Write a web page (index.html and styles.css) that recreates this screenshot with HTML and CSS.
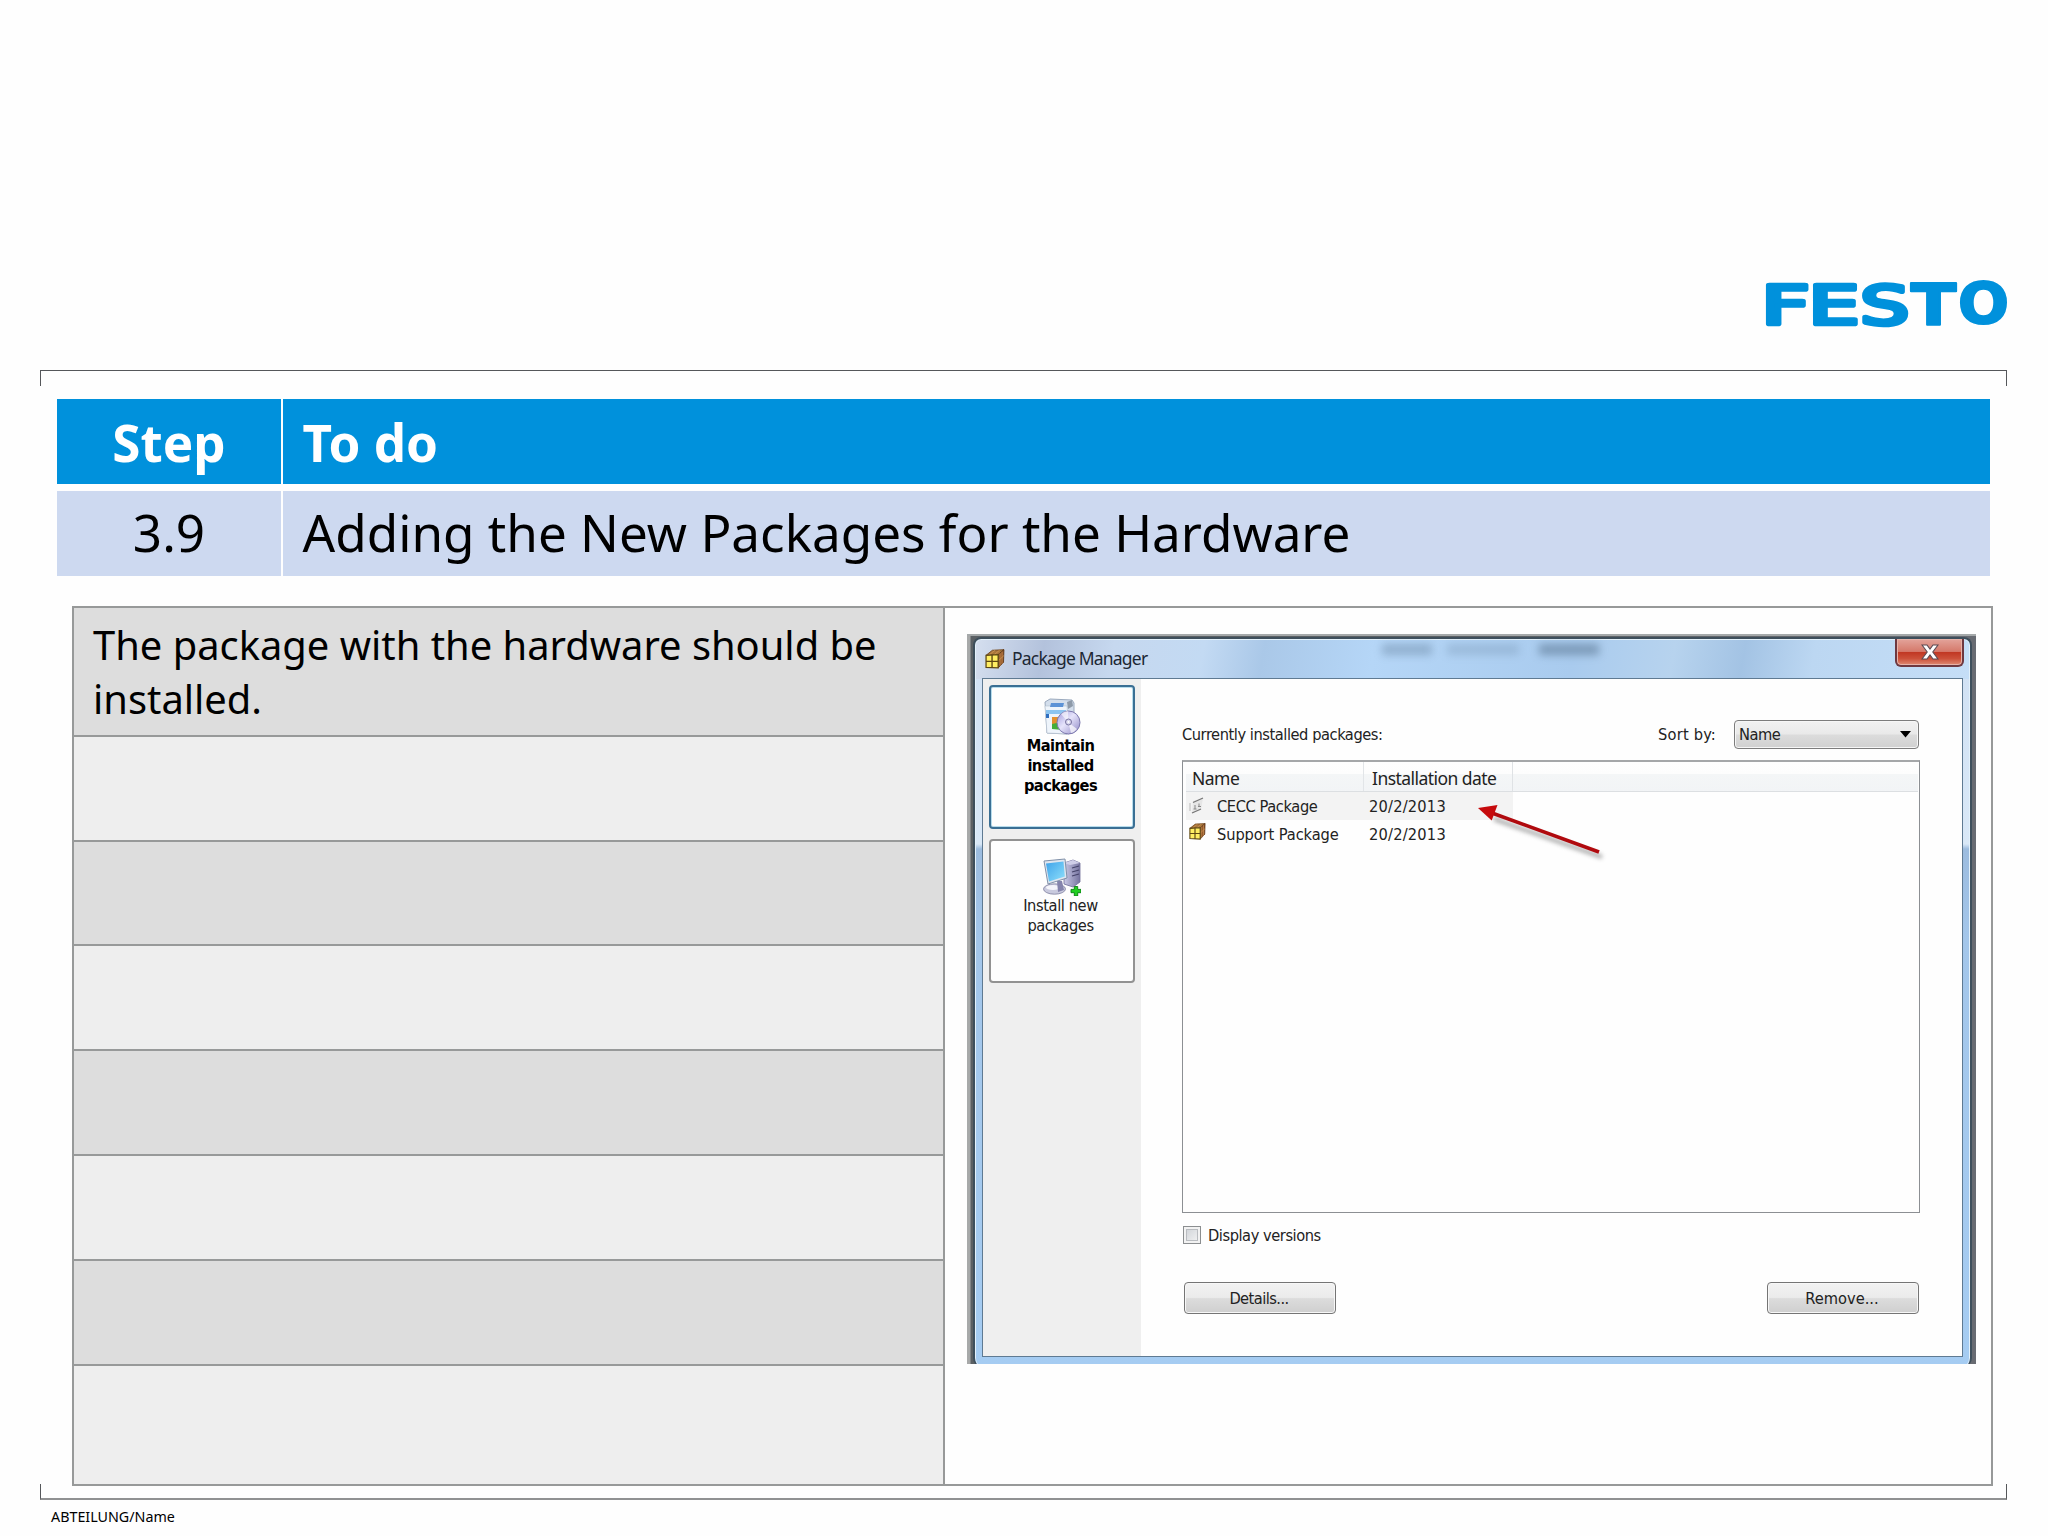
FILE: index.html
```html
<!DOCTYPE html>
<html lang="en">
<head>
    <meta charset="UTF-8">
    <meta name="viewport" content="width=device-width, initial-scale=1.0">
    <title>3.9 Adding the New Packages for the Hardware</title>
    <link rel="stylesheet" href="styles.css">
</head>
<body>
    <svg class="defs" width="0" height="0">
        <defs>
            <linearGradient id="screen" x1="0" y1="0" x2="1" y2="1">
                <stop offset="0" stop-color="#3fa3ea"/>
                <stop offset="1" stop-color="#8ee0fb"/>
            </linearGradient>
            <linearGradient id="metal" x1="0" y1="0" x2="1" y2="0">
                <stop offset="0" stop-color="#c9c9e6"/>
                <stop offset="1" stop-color="#75739f"/>
            </linearGradient>
            <linearGradient id="disc" x1="0" y1="0" x2="1" y2="1">
                <stop offset="0" stop-color="#9f98dc"/>
                <stop offset="0.45" stop-color="#e6e4fb"/>
                <stop offset="1" stop-color="#8d86c4"/>
            </linearGradient>
            <symbol id="package" viewBox="0 0 19 19">
                <path d="M1 6 7 1.2 18 0.6 12.5 5.4Z" fill="#a8763c" stroke="#6b421c" stroke-width=".8"/>
                <path d="M12.5 5.4 18 .6 17.6 12.5 12.5 18Z" fill="#8a4f28" stroke="#5c3515" stroke-width=".8"/>
                <path d="M14.3 4v12M16.2 2.5v11.7M12.5 11.4 18 6.2M4 5.6 9.8 1M8.6 5.5 14 1" stroke="#d39a55" stroke-width=".7" fill="none"/>
                <path d="M1 6 12.5 5.4V18L1 17.4Z" fill="#ffee62" stroke="#5d4713" stroke-width="1.2"/>
                <path d="M6.7 5.8v12M1 11.7h11.5" stroke="#5d4713" stroke-width="1.3"/>
            </symbol>
        </defs>
    </svg>

    <div class="slide">
        <header class="logo">
            <svg width="251" height="60" viewBox="0 0 251 60">
                <text x="1.200" y="43.500" textLength="48.500" lengthAdjust="spacingAndGlyphs">F</text>
                <text x="48.600" y="43.500" textLength="51" lengthAdjust="spacingAndGlyphs">E</text>
                <text x="100.200" y="43.500" textLength="49" lengthAdjust="spacingAndGlyphs">S</text>
                <text class="heavy" x="150.700" y="44.800" textLength="45.600" lengthAdjust="spacingAndGlyphs">T</text>
                <text class="heavy" x="198" y="44.400" textLength="51" lengthAdjust="spacingAndGlyphs">O</text>
            </svg>
        </header>
        <div class="bracket bracket-top"></div>

        <div class="steps">
            <div class="cell head center">Step</div>
            <div class="cell head">To do</div>
            <div class="cell center">3.9</div>
            <div class="cell">Adding the New Packages for the Hardware</div>
        </div>

        <div class="content">
            <div class="notes">
                <div class="note">The package with the hardware should be installed.</div>
                <div class="note"></div>
                <div class="note"></div>
                <div class="note"></div>
                <div class="note"></div>
                <div class="note"></div>
                <div class="note"></div>
                <div class="note"></div>
            </div>
            <div class="figure">
                <div class="desktop">
                    <div class="window">
                        <div class="titlebar">
                            <svg class="title-icon" width="20" height="20"><use href="#package"/></svg>
                            <span class="title">Package Manager</span>
                            <span class="ghost ghost-a"></span>
                            <span class="ghost ghost-b"></span>
                            <span class="ghost ghost-c"></span>
                            <div class="close">
                                <svg width="18" height="16" viewBox="0 0 18 16">
                                    <path d="M1 1h5l3 4 3-4h5l-5.200 7 5.200 7h-5l-3-4-3 4H1l5.200-7Z" fill="#fff" stroke="#5b4a52" stroke-width="1.100"/>
                                </svg>
                            </div>
                        </div>
                        <div class="client">
                            <div class="sidebar">
                                <div class="tile active">
                                    <svg width="38" height="38" viewBox="0 0 38 38">
                                        <path d="M2 4 7 1 29 2 31 5V30L24 36 4 35Z" fill="#d3deec" stroke="#9aa9bd"/>
                                        <path d="M2 8h22l2 28-22-1Z" fill="#eef4fb" stroke="#b3bfcc" stroke-width=".6"/>
                                        <path d="M8 5h13l-1 4H7Z" fill="#5c92d6"/>
                                        <path d="M24 4 29 2l1 6-5 3Z" fill="#8e9aa9"/>
                                        <path d="M3 12h20v4H3Z" fill="#8cc4f0"/>
                                        <path d="M3 16h3v4H3Z" fill="#2f6fc0"/>
                                        <path d="M9 19h11v13l-11-1Z" fill="#45ad3a"/>
                                        <path d="M9 19h9v5l-9 2Z" fill="#e4902f"/>
                                        <circle cx="25.500" cy="24.500" r="11.500" fill="url(#disc)" stroke="#7c78ad"/>
                                        <path d="M25.500 24.500 18 16a11 11 0 0 1 7-3Z" fill="#fff" opacity=".6"/>
                                        <path d="M25.500 24.500 34 31a11 11 0 0 1-6 4Z" fill="#fff" opacity=".7"/>
                                        <circle cx="25.500" cy="24" r="3" fill="#d8d6ef" stroke="#77739f"/>
                                        <circle cx="25.500" cy="24" r="1" fill="#fff"/>
                                    </svg>
                                    <div class="tile-text">Maintain<br>installed<br>packages</div>
                                </div>
                                <div class="tile">
                                    <svg width="38" height="38" viewBox="0 0 38 38">
                                        <path d="M21 5 30 2 37 5V24L30 29 21 26Z" fill="url(#metal)" stroke="#6f6d98" stroke-width=".8"/>
                                        <path d="M29 10l7-2M29 14l7-2M29 18l7-2" stroke="#454369" stroke-width="1.100"/>
                                        <path d="M21 5 30 2 37 5 27 7Z" fill="#cfcee8"/>
                                        <ellipse cx="11.500" cy="31" rx="11" ry="5.200" fill="#c9cade" stroke="#7f809f" stroke-width=".8"/>
                                        <ellipse cx="10" cy="29.500" rx="7" ry="2.600" fill="#f5f5fb"/>
                                        <path d="M14 23h5l2 9-6 2Z" fill="#8584ac"/>
                                        <path d="M1 3 22 1 24 20 5 26Z" fill="#dfe6f0" stroke="#8090a8"/>
                                        <path d="M3 5.500 20.500 3.500 21.800 18.500 6 23.500Z" fill="url(#screen)"/>
                                        <path d="M31.300 28.500h3.400v2.900H38v3.300h-3.300V38h-3.400v-3.300H28v-3.300h3.300Z" fill="#21cf21" stroke="#087d12" stroke-width=".9"/>
                                    </svg>
                                    <div class="tile-text">Install new<br>packages</div>
                                </div>
                            </div>
                            <div class="main">
                                <div class="toolbar">
                                    <span class="t-installed">Currently installed packages:</span>
                                    <span class="t-sort">Sort by:</span>
                                    <div class="select">
                                        <span class="t-select">Name</span>
                                        <svg width="11" height="7" viewBox="0 0 11 7"><path d="M0 0h11L5.500 6.500Z" fill="#000"/></svg>
                                    </div>
                                </div>
                                <div class="list">
                                    <div class="list-head">
                                        <span class="col-name">Name</span>
                                        <span class="col-date">Installation date</span>
                                    </div>
                                    <div class="list-row hover">
                                        <span class="row-icon">
                                            <svg width="16" height="18" viewBox="0 0 16 18">
                                                <path d="M4 4 14 1 12 13 3 16Z" fill="#e6e6e6"/>
                                                <path d="M4 5.500 14 1M3 16l9-4" stroke="#777" stroke-width="1.300" fill="none"/>
                                                <path d="M1 6v8" stroke="#ccc" stroke-width="1.500"/>
                                                <path d="M6 8v4M10 6.500v3M4.500 12h3M9 9.500h3" stroke="#888" stroke-width="1"/>
                                            </svg>
                                        </span>
                                        <span class="row-name t-cecc">CECC Package</span>
                                        <span class="row-date">20/2/2013</span>
                                    </div>
                                    <div class="list-row">
                                        <span class="row-icon row-icon-package"><svg width="17" height="17"><use href="#package"/></svg></span>
                                        <span class="row-name t-support">Support Package</span>
                                        <span class="row-date">20/2/2013</span>
                                    </div>
                                    <svg class="arrow" width="136" height="70" viewBox="0 0 136 70">
                                        <path class="arrow-shadow" d="M20 20 128 58" stroke="#777" stroke-width="4"/>
                                        <path d="M18 14 125 53" stroke="#b00a0e" stroke-width="3.600"/>
                                        <path d="M4 9 23.500 6 17.700 21.500Z" fill="#c60a0c"/>
                                    </svg>
                                </div>
                                <div class="check-row">
                                    <span class="check"></span>
                                    <span class="t-versions">Display versions</span>
                                </div>
                                <div class="buttons">
                                    <div class="button t-details">Details...</div>
                                    <div class="button t-remove">Remove...</div>
                                </div>
                            </div>
                        </div>
                    </div>
                </div>
            </div>
        </div>

        <div class="bracket bracket-bottom"></div>
        <footer class="footer">ABTEILUNG/Name</footer>
    </div>
</body>
</html>
```
FILE: styles.css
```css
* {
    box-sizing: border-box;
}
body {
    margin: 0;
    background: #fefefe;
    color: #000;
    font-family: "Noto Sans", sans-serif;
}
svg {
    display: block;
}
.defs {
    position: absolute;
}
.slide {
    width: 2048px;
    height: 1536px;
    overflow: hidden;
    display: flex;
    flex-direction: column;
}

/* header */
.logo {
    height: 370px;
    padding: 280px 37px 0 0;
    display: flex;
    justify-content: flex-end;
}
.logo svg {
    overflow: visible;
}
.logo text {
    font-family: "DejaVu Sans", sans-serif;
    font-size: 54px;
    fill: #0091dc;
    stroke: #0091dc;
    stroke-width: 4.6px;
    stroke-linejoin: round;
}
.logo .heavy {
    font-weight: 700;
    font-size: 57.5px;
    stroke-width: 2px;
}
.bracket {
    flex: none;
    width: 1967px;
    height: 16px;
    margin-left: 40px;
    border: 1px solid #55575a;
}
.bracket-top {
    border-bottom: none;
}
.bracket-bottom {
    margin-top: -2px;
    border-top: none;
    border-bottom: 2px solid #909192;
}

/* step table */
.steps {
    flex: none;
    width: 1933px;
    margin: 12.5px 0 0 57px;
    display: grid;
    grid-template-columns: 224px 1fr;
    grid-template-rows: 85.5px 85px;
    gap: 7px 2px;
}
.cell {
    background: #cdd9f0;
    padding: 0 19.5px;
    font-size: 51.2px;
    line-height: 83px;
    white-space: nowrap;
}
.cell.head {
    background: #0091dc;
    color: #fff;
    font-weight: 700;
    line-height: 87px;
}
.cell.center {
    text-align: center;
}

/* notes and figure */
.content {
    flex: none;
    width: 1921px;
    height: 880px;
    margin: 30px 0 0 72px;
    display: grid;
    grid-template-columns: 869px 1fr;
    gap: 2px;
    padding: 2px;
    background: #979999;
}
.notes {
    display: grid;
    grid-template-rows: 126.8px repeat(6, 102.85px) 1fr;
    gap: 2px;
}
.note {
    padding: 10px 19px;
    font-size: 39.87px;
    line-height: 54.4px;
    background: #eeeeee;
}
.note:nth-child(odd) {
    background: #dddddd;
}
.figure {
    background: #fefefe;
    padding: 26px 0 0 22px;
}

/* window */
.desktop {
    width: 1009px;
    height: 730px;
    padding: 3px 4px 0 6px;
    overflow: hidden;
    background: linear-gradient(90deg, #a7a9a9 0, #a7a9a9 3px, #5b6064 4px, #5b6064 50%, #686b72 100%);
    border-top: 2px solid #a5a9aa;
}
.window {
    height: 730px;
    margin-top: -2px;
    padding: 0 7px;
    border: 2px solid #3e4f5c;
    border-bottom: none;
    border-radius: 8px 8px 9px 9px;
    background:
        linear-gradient(100deg, #d5dfef 0, #b3c2dc 7%, #c6d8ef 14%, #c3daf3 23%, #aac8e8 29%, #b5d6f7 40%, #a9cbee 60%, #b7d3ee 70%, #a3c3e4 77%, #bcd7f2 84%, #c5def7 100%) 0 0 / 100% 40px no-repeat,
        linear-gradient(180deg, #d0e1f4 0, #d9e8f7 205px, #9cbcdf 210px, #a3c6ea 300px, #a5ccf2 100%);
    box-shadow: inset 0 0 0 1px #e3f1fb;
}
.titlebar {
    position: relative;
    height: 39px;
    padding: 10px 0 0 3px;
    display: flex;
}
.title {
    margin-left: 7px;
    font-size: 17.5px;
    line-height: 18px;
    color: #1c2733;
    letter-spacing: -0.8px;
}
.ghost {
    position: absolute;
    top: 5px;
    height: 11px;
    background: #5c7894;
    filter: blur(4px);
    opacity: .4;
}
.ghost-a {
    left: 400px;
    width: 50px;
}
.ghost-b {
    left: 465px;
    width: 72px;
    opacity: .25;
}
.ghost-c {
    left: 557px;
    width: 60px;
    opacity: .6;
}
.close {
    position: absolute;
    top: 0;
    right: -1px;
    width: 69px;
    height: 28px;
    display: flex;
    align-items: center;
    justify-content: center;
    border: 2px solid #6e3840;
    border-top: none;
    border-radius: 0 0 6px 6px;
    background: linear-gradient(180deg, #e3a49b 0, #d5796b 48%, #c03622 50%, #cc5039 75%, #de8a73 100%);
    box-shadow: inset 0 0 0 1px #e7b2a8;
}
.client {
    height: 679px;
    display: flex;
    border: 1px solid #5f7a92;
    background: #fefefe;
    font-family: "DejaVu Sans Condensed", "DejaVu Sans", sans-serif;
    font-stretch: condensed;
    font-size: 16.3px;
    color: #222;
}
.sidebar {
    width: 158px;
    padding: 6px 6px;
    background: #efefef;
}
.tile {
    height: 144px;
    margin-bottom: 10px;
    padding-top: 17px;
    display: flex;
    flex-direction: column;
    align-items: center;
    background: #fefefe;
    border: 2px solid #929292;
    border-radius: 4px;
}
.tile.active {
    padding-top: 11px;
    border-color: #3a6f94;
    box-shadow: inset 0 0 0 1px #b7dcec;
    color: #000;
    font-weight: 700;
}
.tile-text {
    margin-right: 3px;
    text-align: center;
    line-height: 20px;
    letter-spacing: -0.4px;
}
.tile.active .tile-text {
    letter-spacing: -0.6px;
}
.main {
    flex: 1;
    padding: 41px 42px 0 41px;
    white-space: nowrap;
}
.toolbar {
    height: 28px;
    padding-right: 1px;
    display: flex;
    align-items: center;
}
.t-installed {
    letter-spacing: -0.45px;
}
.t-sort {
    margin-left: auto;
    margin-right: 18px;
    letter-spacing: 0.2px;
}
.select {
    width: 185px;
    height: 29px;
    padding: 0 7px 0 4px;
    display: flex;
    align-items: center;
    justify-content: space-between;
    border: 1.5px solid #7c7c7c;
    border-radius: 4px;
    background: linear-gradient(180deg, #f1f1f1 0, #e9e9e9 49%, #dcdcdc 51%, #d0d0d0 100%);
    box-shadow: inset 0 0 0 1px #f6f6f6;
}
.t-select {
    letter-spacing: -0.5px;
}
.list {
    position: relative;
    height: 453px;
    margin-top: 12px;
    padding: 0 1px 0 3px;
    border: 1px solid #8c8f93;
    border-top: 2px solid #a5a7a9;
}
.list-head {
    height: 30px;
    display: flex;
    background: linear-gradient(180deg, #fefefe 0, #fdfdfd 40%, #f4f6f7 43%, #f2f4f6 100%);
    border-bottom: 1px solid #dcdfe2;
    font-family: "Noto Sans", sans-serif;
    font-size: 17.5px;
    line-height: 32px;
}
.col-name {
    width: 178px;
    padding-left: 6px;
    border-right: 1px solid #e2e5e8;
    letter-spacing: -0.5px;
}
.col-date {
    width: 149px;
    padding-left: 8px;
    border-right: 1px solid #dfe2e5;
    letter-spacing: -0.55px;
}
.list-row {
    width: 327px;
    height: 28px;
    display: flex;
    align-items: center;
}
.list-row.hover {
    background: #f3f3f3;
}
.row-icon {
    width: 31px;
    padding-left: 3px;
}
.row-icon-package {
    padding-bottom: 5px;
}
.row-name {
    width: 152px;
}
.t-cecc {
    letter-spacing: -0.4px;
}
.t-support {
    letter-spacing: -0.1px;
}
.row-date {
    letter-spacing: 0.2px;
}
.arrow {
    position: absolute;
    left: 291px;
    top: 37px;
}
.arrow-shadow {
    filter: blur(2px);
    opacity: .6;
}
.check-row {
    height: 18px;
    margin-top: 13px;
    display: flex;
    align-items: center;
}
.check {
    width: 18px;
    height: 18px;
    margin: 0 7px 0 1px;
    border: 1px solid #8b8e90;
    background: linear-gradient(135deg, #cbcfd4, #f6f6f6);
    box-shadow: inset 0 0 0 2px #f2f2f2, inset 0 0 0 3px #b9bcc0;
}
.t-versions {
    letter-spacing: -0.45px;
}
.buttons {
    margin-top: 38px;
    padding: 0 1px 0 2px;
    display: flex;
    justify-content: space-between;
}
.button {
    width: 152px;
    height: 32px;
    padding-right: 2px;
    line-height: 31px;
    text-align: center;
    border: 1px solid #757575;
    border-radius: 4px;
    background: linear-gradient(180deg, #f2f2f2 0, #ebebeb 48%, #dcdcdc 52%, #cfcfcf 100%);
    box-shadow: inset 0 0 0 1px #f7f7f7;
}
.t-details {
    letter-spacing: -0.55px;
}

.footer {
    padding: 7px 0 0 51px;
    font-size: 14.3px;
    line-height: 20px;
}
```
